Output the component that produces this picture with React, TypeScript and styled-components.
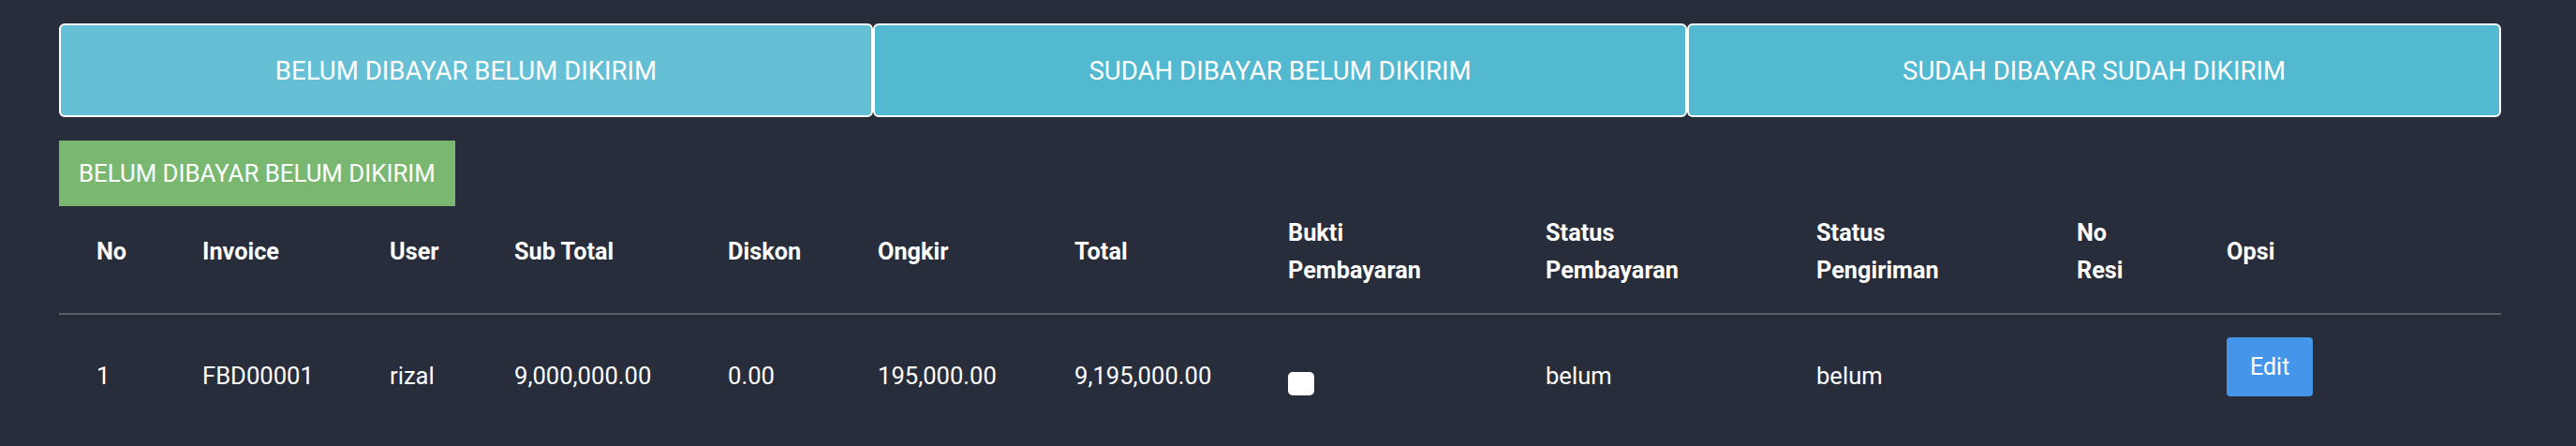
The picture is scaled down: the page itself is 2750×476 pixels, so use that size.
import React from 'react';
import styled, { createGlobalStyle } from 'styled-components';

const GlobalStyle = createGlobalStyle`
  body {
    margin: 0;
    background: #272d3b;
    font-family: Roboto, 'Liberation Sans', sans-serif;
    color: #ffffff;
  }
`;

interface Order {
  no: number;
  invoice: string;
  user: string;
  subTotal: string;
  diskon: string;
  ongkir: string;
  total: string;
  statusBayar: string;
  statusKirim: string;
  resi: string;
}

const tabs = ['BELUM DIBAYAR BELUM DIKIRIM', 'SUDAH DIBAYAR BELUM DIKIRIM', 'SUDAH DIBAYAR SUDAH DIKIRIM'];

// widths measured off the table grid
const columns: { label: string[]; width: number }[] = [
  { label: ['No'], width: 113 },
  { label: ['Invoice'], width: 200 },
  { label: ['User'], width: 133 },
  { label: ['Sub Total'], width: 228 },
  { label: ['Diskon'], width: 160 },
  { label: ['Ongkir'], width: 210 },
  { label: ['Total'], width: 228 },
  { label: ['Bukti', 'Pembayaran'], width: 275 },
  { label: ['Status', 'Pembayaran'], width: 289 },
  { label: ['Status', 'Pengiriman'], width: 278 },
  { label: ['No', 'Resi'], width: 160 },
  { label: ['Opsi'], width: 333 },
];

const orders: Order[] = [
  {
    no: 1,
    invoice: 'FBD00001',
    user: 'rizal',
    subTotal: '9,000,000.00',
    diskon: '0.00',
    ongkir: '195,000.00',
    total: '9,195,000.00',
    statusBayar: 'belum',
    statusKirim: 'belum',
    resi: '',
  },
];

export default function App() {
  return (
    <>
      <GlobalStyle />
      <Page>
        <TabBar>
          {tabs.map((t, i) => (
            <Tab key={t} $active={i === 0}>
              {t}
            </Tab>
          ))}
        </TabBar>
        <SectionLabel>BELUM DIBAYAR BELUM DIKIRIM</SectionLabel>
        <Table>
          <colgroup>
            {columns.map((c, i) => (
              <Col key={i} $w={c.width} />
            ))}
          </colgroup>
          <thead>
            <tr>
              {columns.map((c, i) => (
                <Th key={i}>
                  {c.label.map((l, j) => (
                    <React.Fragment key={j}>
                      {j > 0 && <br />}
                      {l}
                    </React.Fragment>
                  ))}
                </Th>
              ))}
            </tr>
          </thead>
          <tbody>
            {orders.map((o) => (
              <tr key={o.invoice}>
                <Td>{o.no}</Td>
                <Td>{o.invoice}</Td>
                <Td>{o.user}</Td>
                <Td>{o.subTotal}</Td>
                <Td>{o.diskon}</Td>
                <Td>{o.ongkir}</Td>
                <Td>{o.total}</Td>
                <Td $top={61}>
                  <ProofThumb />
                </Td>
                <Td>{o.statusBayar}</Td>
                <Td>{o.statusKirim}</Td>
                <Td>{o.resi}</Td>
                <Td $top={24}>
                  <EditButton>Edit</EditButton>
                </Td>
              </tr>
            ))}
          </tbody>
        </Table>
      </Page>
    </>
  );
}

const Page = styled.div`
  padding: 25px 80px 0 63px;
`;

const TabBar = styled.div`
  display: flex;
`;

const Tab = styled.button<{ $active?: boolean }>`
  flex: 1;
  height: 100px;
  border: 2px solid #ffffff;
  border-radius: 6px;
  background: ${({ $active }) => ($active ? '#65c0d6' : '#52b9d1')};
  color: #ffffff;
  font-family: Roboto, 'Liberation Sans', sans-serif;
  font-size: 27.6px;
  cursor: pointer;
`;

const SectionLabel = styled.div`
  display: inline-block;
  margin-top: 25px;
  padding: 0 21px;
  height: 70px;
  line-height: 70px;
  background: #7ab872;
  font-size: 25.8px;
`;

const Table = styled.table`
  width: 100%;
  border-collapse: collapse;
  table-layout: fixed;
`;

const Col = styled.col<{ $w: number }>`
  width: ${({ $w }) => $w}px;
`;

const Th = styled.th`
  padding: 9px 10px 25px 40px;
  text-align: left;
  vertical-align: middle;
  font-size: 25.3px;
  font-weight: 700;
  line-height: 40px;
  white-space: nowrap;
  border-bottom: 2px solid #5d6068;
`;

const Td = styled.td<{ $top?: number }>`
  padding: ${({ $top }) => $top ?? 45}px 10px 40px 40px;
  vertical-align: top;
  font-size: 25.6px;
  line-height: 40px;
  white-space: nowrap;
`;

const ProofThumb = styled.span`
  display: block;
  width: 28px;
  height: 25px;
  border-radius: 5px;
  background: #ffffff;
`;

const EditButton = styled.button`
  height: 63px;
  padding: 0 25px;
  border: none;
  border-radius: 4px;
  background: #4596ea;
  color: #ffffff;
  font-family: Roboto, 'Liberation Sans', sans-serif;
  font-size: 25px;
  cursor: pointer;
`;
